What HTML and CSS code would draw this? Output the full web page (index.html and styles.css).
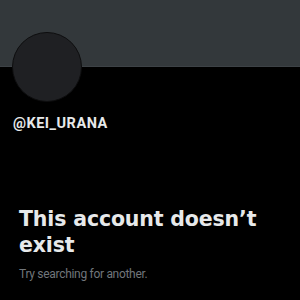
FILE: index.html
```html
<!DOCTYPE html>
<html lang="en">
<head>
    <meta charset="UTF-8">
    <title>Profile</title>
    <link rel="stylesheet" href="styles.css">
</head>
<body>
    <div class="banner"></div>
    <div class="profile">
        <div class="avatar"></div>
        <div class="handle">@KEI_URANA</div>
    </div>
    <div class="empty">
        <h1 class="empty-title">This account doesn’t exist</h1>
        <p class="empty-text">Try searching for another.</p>
    </div>
</body>
</html>
```

FILE: styles.css
```css
* {
    margin: 0;
    padding: 0;
    box-sizing: border-box;
    font-family: Roboto, "Liberation Sans", sans-serif;
}

body {
    background-color: #000;
    width: 300px;
    height: 300px;
    overflow: hidden;
}

.banner {
    height: 67px;
    background-color: #33383b;
    border-bottom: 1px solid #3d4246;
}

.profile {
    padding: 0 12px;
}

.avatar {
    width: 70px;
    height: 70px;
    margin-top: -35px;
    border-radius: 50%;
    background-color: #1f2023;
    border: 1px solid #0d0d0e;
}

.handle {
    margin-top: 13px;
    padding-left: 1px;
    color: #e7e9ea;
    font-size: 14.5px;
    line-height: 18px;
    font-weight: bold;
    letter-spacing: 0.5px;
}

.empty {
    padding: 0 19px;
    margin-top: 73px;
}

.empty-title {
    max-width: 250px;
    color: #e7e9ea;
    font-family: "DejaVu Sans", sans-serif;
    font-size: 20.5px;
    line-height: 26px;
    font-weight: bold;
    letter-spacing: -0.15px;
}

.empty-text {
    margin-top: 8px;
    color: #71767b;
    font-size: 12px;
    line-height: 16px;
    letter-spacing: -0.3px;
}
```
